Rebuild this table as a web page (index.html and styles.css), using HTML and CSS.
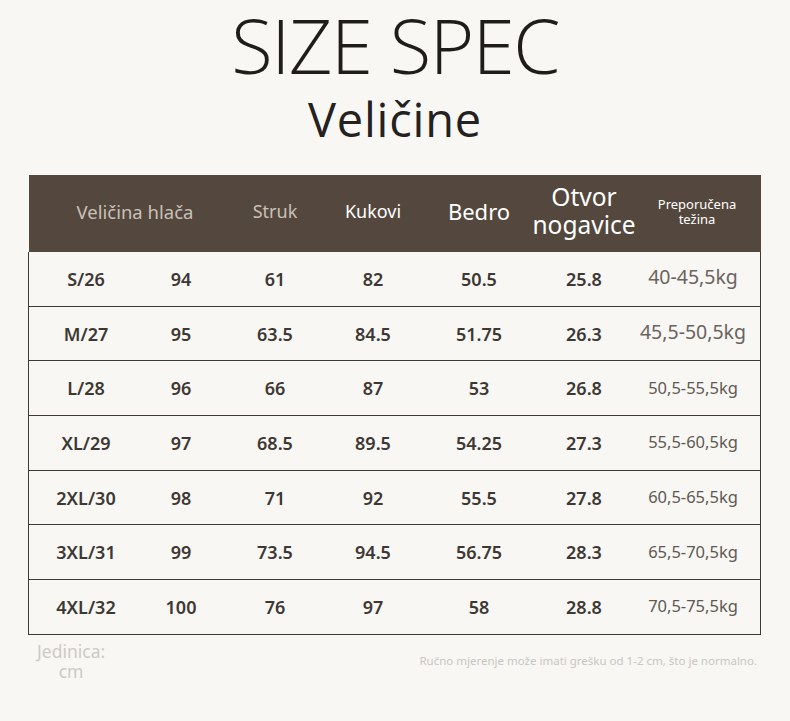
FILE: index.html
```
<!DOCTYPE html>
<html>
<head>
<meta charset="utf-8">
<link rel="stylesheet" href="styles.css">
</head>
<body>
<div class="page">
  <h1 class="title">SIZE SPEC</h1>
  <h2 class="subtitle">Veličine</h2>
  <div class="table">
    <div class="head">
      <div class="h h-size">Veličina hlača</div>
      <div class="h h-struk">Struk</div>
      <div class="h h-kuk">Kukovi</div>
      <div class="h h-bed">Bedro</div>
      <div class="h h-otv">Otvor<br>nogavice</div>
      <div class="h h-pre">Preporučena<br>težina</div>
    </div>
    <div class="row"><div>S/26</div><div>94</div><div>61</div><div>82</div><div>50.5</div><div>25.8</div><div class="w w-big">40-45,5kg</div></div>
    <div class="row"><div>M/27</div><div>95</div><div>63.5</div><div>84.5</div><div>51.75</div><div>26.3</div><div class="w w-big">45,5-50,5kg</div></div>
    <div class="row"><div>L/28</div><div>96</div><div>66</div><div>87</div><div>53</div><div>26.8</div><div class="w">50,5-55,5kg</div></div>
    <div class="row"><div>XL/29</div><div>97</div><div>68.5</div><div>89.5</div><div>54.25</div><div>27.3</div><div class="w">55,5-60,5kg</div></div>
    <div class="row"><div>2XL/30</div><div>98</div><div>71</div><div>92</div><div>55.5</div><div>27.8</div><div class="w">60,5-65,5kg</div></div>
    <div class="row"><div>3XL/31</div><div>99</div><div>73.5</div><div>94.5</div><div>56.75</div><div>28.3</div><div class="w">65,5-70,5kg</div></div>
    <div class="row"><div>4XL/32</div><div>100</div><div>76</div><div>97</div><div>58</div><div>28.8</div><div class="w">70,5-75,5kg</div></div>
  </div>
  <div class="foot">
    <div class="unit">Jedinica:<br>cm</div>
    <div class="note">Ručno mjerenje može imati grešku od 1-2 cm, što je normalno.</div>
  </div>
</div>
</body>
</html>
```
FILE: styles.css
```
html, body {
  margin: 0;
  padding: 0;
  background: #f8f7f3;
}
.page {
  width: 790px;
  height: 721px;
  font-family: "Noto Sans", "Open Sans", sans-serif;
  color: #3e3834;
  overflow: hidden;
}
.title {
  margin: 0;
  padding-top: 2px;
  text-align: center;
  font-family: "Open Sans", "Noto Sans", sans-serif;
  font-weight: 300;
  font-size: 76px;
  line-height: 86px;
  color: #1f1c1a;
  letter-spacing: -1.5px;
}
.subtitle {
  margin: 0;
  text-align: center;
  font-family: "Open Sans", "Noto Sans", sans-serif;
  font-weight: 400;
  font-size: 47px;
  line-height: 62px;
  color: #24211f;
  letter-spacing: 0.8px;
}
.table {
  margin: 25px 0 0 29px;
  width: 732px;
}
.head {
  display: grid;
  grid-template-columns: 114px 76px 112px 84px 128px 82px 136px;
  height: 77px;
  background: #54473d;
  align-items: center;
}
.h {
  justify-self: center;
  white-space: nowrap;
  text-align: center;
  color: #fff;
  margin-top: -5px;
}
.h-size {
  grid-column: span 2;
  color: #c9c0b7;
  font-size: 18.5px;
  padding-left: 22px;
}
.h-struk {
  color: #c9c0b7;
  font-size: 18px;
}
.h-kuk {
  font-size: 18px;
}
.h-bed {
  font-size: 22px;
}
.h-otv {
  font-size: 24.5px;
  line-height: 28px;
  margin-top: -6px;
}
.h-pre {
  font-size: 13px;
  line-height: 15px;
  padding-left: 8px;
  margin-top: -3px;
}
.row {
  display: grid;
  grid-template-columns: 114px 76px 112px 84px 128px 82px 136px;
  height: 53.7px;
  border: 1px solid #3f3834;
  border-top: none;
  box-sizing: content-box;
  margin-left: -1px;
  align-items: center;
  text-align: center;
  font-size: 18px;
  font-weight: 600;
  color: #3e3834;
}
.row > div {
  justify-self: center;
  white-space: nowrap;
}
.row .w {
  font-weight: 400;
  font-size: 16.5px;
  color: #5f5954;
  margin-top: -2px;
}
.row .w.w-big {
  font-size: 19.5px;
  color: #6a645f;
  margin-top: -4px;
}
.foot {
  display: flex;
  justify-content: space-between;
  padding: 6px 33px 0 37px;
}
.unit {
  font-size: 17.5px;
  line-height: 20px;
  color: #cdcac6;
  text-align: center;
}
.note {
  font-size: 11.5px;
  color: #c9c6c2;
  padding-top: 12px;
}
```
